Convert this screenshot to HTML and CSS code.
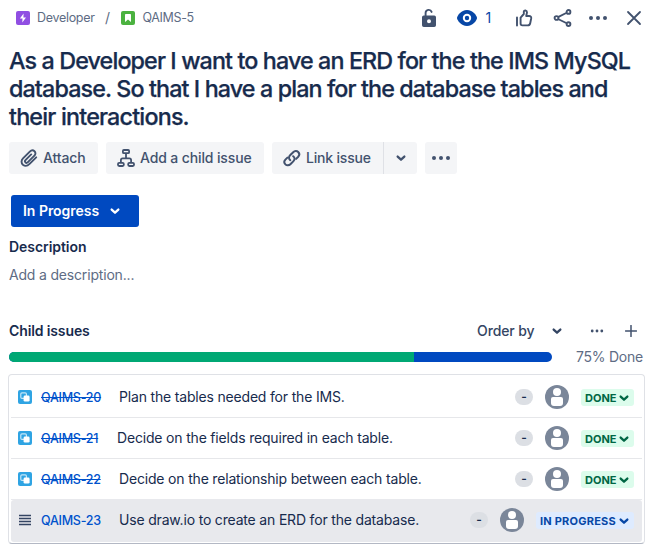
FILE: index.html
```html
<!DOCTYPE html>
<html lang="en">
<head>
<meta charset="utf-8">
<title>QAIMS-5</title>
<link rel="stylesheet" href="styles.css">
</head>
<body>
<svg class="defs" width="0" height="0">
  <symbol id="chevron" viewBox="0 0 10 10"><path d="M2.2 3.800 5 6.400 7.800 3.800" fill="none" stroke="currentColor" stroke-width="1.900" stroke-linecap="round" stroke-linejoin="round"/></symbol>
  <symbol id="dots" viewBox="0 0 20 6"><circle cx="3" cy="3" r="2"/><circle cx="10" cy="3" r="2"/><circle cx="17" cy="3" r="2"/></symbol>
  <symbol id="subtask" viewBox="0 0 14 14"><rect width="14" height="14" rx="2" fill="#2fa4e3"/><rect x="2.800" y="2.800" width="5.600" height="5.600" rx="1.200" fill="none" stroke="#c4e6f8" stroke-width="1.200"/><rect x="5.600" y="5.600" width="6" height="6" rx="1.400" fill="#fff"/></symbol>
  <symbol id="person" viewBox="0 0 24 24"><circle cx="12" cy="12" r="12" fill="#7a8699"/><circle cx="12" cy="7" r="4" fill="#fff"/><path d="M6 14q0-2 2-2h8q2 0 2 2v4q0 3-3 3H9q-3 0-3-3z" fill="#fff"/></symbol>
</svg>
<main class="issue">
  <header class="topbar">
    <svg class="type" viewBox="0 0 14 14"><rect width="14" height="14" rx="2" fill="#904ee2"/><path d="M7.600 2.600 3.900 7.600h2.600L6.300 11.400 10 6.400H7.400z" fill="#fff"/></svg>
    <span class="crumb crumb-parent">Developer</span>
    <span class="slash">/</span>
    <svg class="type" viewBox="0 0 14 14"><rect width="14" height="14" rx="2" fill="#4bb23f"/><path d="M4 3.800q0-.8.8-.8h4.400q.8 0 .8.800V11L7 8.400 4 11z" fill="#fff"/></svg>
    <span class="crumb crumb-key">QAIMS-5</span>
    <svg class="lock" width="16" height="20" viewBox="0 0 16 20"><path d="M4.600 9V4.800a3.100 3.100 0 0 1 6-.9" fill="none" stroke="#42526e" stroke-width="1.900" stroke-linecap="round"/><path fill-rule="evenodd" d="M2.800 7.500h10.400q1.800 0 1.800 1.800v7.900q0 1.800-1.800 1.800H2.800Q1 19 1 17.200V9.300q0-1.800 1.800-1.800zM8 11.300a2 2 0 1 0 0 4 2 2 0 0 0 0-4z" fill="#42526e"/></svg>
    <svg class="eye" width="20" height="16" viewBox="0 0 20 16"><path d="M10 0C4 0 0 6 0 8s4 8 10 8 10-6 10-8-4-8-10-8z" fill="#0747a6"/><circle cx="10" cy="8" r="3.200" fill="#0747a6" stroke="#fff" stroke-width="2"/></svg>
    <span class="watchers">1</span>
    <svg class="like" width="18" height="18" viewBox="0 0 18 18" fill="none" stroke="#42526e" stroke-width="1.900" stroke-linecap="round" stroke-linejoin="round"><path d="M2 8.500v8M5.600 8.600 8.800 5V2.800C8.800.8 12 1 12 3.500L11.200 7H14q2.500 0 2.200 2.200l-1 5q-.4 2.200-2.600 2.200H7.400q-1.800 0-1.800-1.800z"/></svg>
    <svg class="share" width="20" height="18" viewBox="0 0 20 18" fill="none" stroke="#42526e" stroke-width="1.900"><path d="M5 8.200 13.200 4M5 10l8.200 4"/><circle cx="3.500" cy="9" r="1.900"/><circle cx="15.500" cy="2.900" r="1.900"/><circle cx="15.500" cy="15.100" r="1.900"/></svg>
    <svg class="more" width="20" height="6" fill="#42526e"><use href="#dots"/></svg>
    <svg class="close" width="16" height="16" viewBox="0 0 16 16"><path d="M2 2l12 12M14 2 2 14" stroke="#42526e" stroke-width="1.800" stroke-linecap="round"/></svg>
  </header>

  <h1><span class="t1">As a Developer I want to have an ERD for the the IMS MySQL</span><br><span class="t2">database. So that I have a plan for the database tables and</span><br><span class="t3">their interactions.</span></h1>

  <div class="actions">
    <button class="btn attach"><svg width="18" height="20" viewBox="0 0 18 20" fill="none" stroke="#42526e" stroke-width="1.900" stroke-linecap="round"><path d="M16.200 9.300 9.600 15.900c-2 2-4.800 2.400-6.700.8-1.900-1.700-1.700-4.500.1-6.300l6.800-6.800c1.400-1.400 3.500-1.500 4.700-.4 1.300 1.200 1.200 3.200-.1 4.500l-6.500 6.500c-.8.8-1.900.8-2.500.2-.7-.7-.5-1.700.3-2.500l5.500-5.500"/></svg><span>Attach</span></button>
    <button class="btn child"><svg width="18" height="18" viewBox="0 0 18 18" fill="none" stroke="#42526e" stroke-width="1.800"><rect x="5.900" y="1" width="6.200" height="3.200" rx="1"/><rect x="1" y="13.800" width="5.800" height="3.200" rx="1.200"/><rect x="11.200" y="13.800" width="5.800" height="3.200" rx="1.200"/><path d="M9 4.200V9M3.900 13.800v-2.600Q3.900 9.300 5.600 9.300h6.800q1.700 0 1.700 1.900v2.600"/></svg><span>Add a child issue</span></button>
    <div class="split">
      <button class="btn link"><svg width="20" height="20" viewBox="0 0 20 20" fill="none" stroke="#42526e" stroke-width="2" stroke-linecap="round"><path d="M8.300 12.200C6.500 10.600 6.700 8.700 8.100 7.300l3.100-3.100c1.400-1.400 3.700-1.500 5-.2s1.300 3.400 0 4.800l-2.100 2.100"/><path d="M11.200 8.200c1.900 1.600 1.700 3.500.3 4.900l-3.100 3.100c-1.400 1.400-3.700 1.500-5 .2s-1.300-3.400 0-4.800L5.400 9.600"/></svg><span>Link issue</span></button>
      <button class="btn drop"><svg width="12" height="12"><use href="#chevron"/></svg></button>
    </div>
    <button class="btn kebab"><svg width="20" height="6" fill="#42526e"><use href="#dots"/></svg></button>
  </div>

  <button class="status"><span>In Progress</span><svg width="12" height="12"><use href="#chevron"/></svg></button>

  <h2 class="desc-title"><span>Description</span></h2>
  <p class="desc"><span>Add a description...</span></p>

  <div class="children-head">
    <h2><span class="child-title">Child issues</span></h2>
    <span class="order">Order by</span>
    <svg class="order-chev" width="12" height="12"><use href="#chevron"/></svg>
    <svg class="small-more" width="14" height="4" viewBox="0 0 14 4" fill="#42526e"><circle cx="2.200" cy="2" r="1.400"/><circle cx="7" cy="2" r="1.400"/><circle cx="11.800" cy="2" r="1.400"/></svg>
    <svg class="plus" width="12" height="12" viewBox="0 0 12 12"><path d="M6 .5v11M.5 6h11" stroke="#42526e" stroke-width="1.500" stroke-linecap="round"/></svg>
  </div>
  <div class="progress">
    <div class="bar"><div class="bar-done"></div></div>
    <span class="pct">75% Done</span>
  </div>

  <div class="list">
    <div class="row">
      <svg class="type"><use href="#subtask"/></svg><span class="key done">QAIMS-20</span><span class="summary">Plan the tables needed for the IMS.</span>
      <span class="points">-</span><svg class="avatar"><use href="#person"/></svg><span class="tag tag-done"><span>DONE</span><svg width="12" height="12"><use href="#chevron"/></svg></span>
    </div>
    <div class="row">
      <svg class="type"><use href="#subtask"/></svg><span class="key done">QAIMS-21</span><span class="summary s21">Decide on the fields required in each table.</span>
      <span class="points">-</span><svg class="avatar"><use href="#person"/></svg><span class="tag tag-done"><span>DONE</span><svg width="12" height="12"><use href="#chevron"/></svg></span>
    </div>
    <div class="row">
      <svg class="type"><use href="#subtask"/></svg><span class="key done">QAIMS-22</span><span class="summary">Decide on the relationship between each table.</span>
      <span class="points">-</span><svg class="avatar"><use href="#person"/></svg><span class="tag tag-done"><span>DONE</span><svg width="12" height="12"><use href="#chevron"/></svg></span>
    </div>
    <div class="row active">
      <svg class="type" viewBox="0 0 14 14"><path d="M1 2.500h12M1 5.500h12M1 8.500h12M1 11.500h12" stroke="#344563" stroke-width="1.500"/></svg><span class="key">QAIMS-23</span><span class="summary">Use draw.io to create an ERD for the database.</span>
      <span class="points">-</span><svg class="avatar"><use href="#person"/></svg><span class="tag tag-progress"><span>IN PROGRESS</span><svg width="12" height="12"><use href="#chevron"/></svg></span>
    </div>
  </div>
</main>
</body>
</html>
```
FILE: styles.css
```css
* { box-sizing: border-box; }
body { margin: 0; background: #fff; color: #172b4d; font-family: Inter, "Liberation Sans", sans-serif; font-size: 14px; line-height: 20px; }
svg { display: block; flex: none; }
.defs { position: absolute; }
button { font: inherit; border: 0; margin: 0; padding: 0; }
h1, h2, p { margin: 0; }
span { white-space: nowrap; }
.issue { width: 655px; height: 559px; padding: 0 11px 0 9px; overflow: hidden; }
.type { width: 14px; height: 14px; }

.topbar { display: flex; align-items: center; height: 36px; padding-left: 7px; }
.crumb { color: #5e6c84; font-size: 12.5px; }
.crumb-parent { width: 57px; margin-left: 7px; letter-spacing: -0.3px; }
.slash { width: 7px; margin: 0 10px; color: #5e6c84; text-align: center; }
.crumb-key { width: 52px; margin-left: 7.5px; letter-spacing: -0.35px; }
.lock { margin-left: 226px; margin-top: -1px; }
.eye { margin-left: 20px; }
.watchers { width: 9px; margin-left: 9px; color: #0747a6; }
.like { margin-left: 20px; }
.share { margin-left: 20px; }
.more { margin-left: 15px; }
.close { margin-left: 18px; }

h1 { margin-top: 11px; font-size: 23.3px; line-height: 28px; font-weight: 500; white-space: nowrap; -webkit-text-stroke: 0.25px #172b4d; }
.t1 { letter-spacing: -0.88px; }
.t2 { letter-spacing: -0.88px; }
.t3 { letter-spacing: -0.8px; }

.actions { display: flex; gap: 8px; margin-top: 11px; }
.btn { display: flex; align-items: center; height: 32px; border-radius: 3px; background: #f4f5f7; color: #42526e; font-weight: 500; letter-spacing: -0.13px; }
.attach { width: 89px; padding-left: 11px; gap: 5px; }
.child { width: 158px; padding-left: 11px; gap: 5px; }
.split { display: flex; }
.link { width: 112px; padding-left: 10px; gap: 4px; border-right: 1px solid #dfe1e6; border-radius: 3px 0 0 3px; letter-spacing: -0.18px; }
.drop { width: 33px; justify-content: center; border-radius: 0 3px 3px 0; }
.kebab { width: 32px; justify-content: center; }

.status { display: flex; align-items: center; width: 128px; height: 32px; margin: 21px 0 0 2px; padding-left: 12px; gap: 10px; border-radius: 3px; background: #0049c0; color: #fff; font-weight: 600; letter-spacing: -0.03px; }
.status span { width: 76px; text-align: left; }

h2 { font-size: 14px; line-height: 20px; font-weight: 600; }
.desc-title { margin-top: 10px; letter-spacing: -0.05px; }
.desc { margin-top: 8px; color: #5e6c84; letter-spacing: -0.18px; }
.children-head { display: flex; align-items: center; height: 20px; margin-top: 36px; color: #344563; }
.children-head h2 { width: 468px; color: #172b4d; letter-spacing: -0.12px; }
.order { width: 58px; font-weight: 500; letter-spacing: -0.1px; }
.order-chev { margin-left: 16px; }
.small-more { margin-left: 27px; }
.plus { margin-left: 21px; }
.progress { display: flex; align-items: center; height: 20px; margin-top: 6px; }
.bar { flex: none; width: 543px; height: 10px; overflow: hidden; border-radius: 5px; background: #0049c0; }
.bar-done { width: 405px; height: 10px; background: #00a874; }
.pct { margin-left: 24px; color: #5e6c84; letter-spacing: -0.25px; }

.list { width: 637px; height: 170px; margin: 7px 0 0 -1px; padding: 2px; border: 1px solid #dfe1e6; border-bottom-color: #b3b8c4; border-radius: 4px; }
.row { display: flex; align-items: center; height: 41px; padding: 0 8px 0 7px; border-bottom: 1px solid #e6e7ea; }
.row:nth-child(3) { border-bottom-color: #e8e9ed; }
.row.active { height: 42px; padding-bottom: 2px; background: #e8e9ed; border: 0; border-radius: 3px; }
.key { width: 60px; margin-left: 9px; padding-top: 2px; color: #0052cc; font-size: 12.5px; font-weight: 450; letter-spacing: -0.25px; }
.done { text-decoration: line-through; }
.summary { flex: 1; margin-left: 18px; letter-spacing: -0.18px; }
.s21 { margin-left: 16px; }
.points { width: 18px; height: 16px; border-radius: 8px; background: #dcdfe4; font-size: 12px; line-height: 15px; text-align: center; font-weight: 600; }
.avatar { width: 24px; height: 24px; margin: 0 12px; }
.tag { display: flex; align-items: center; justify-content: space-between; height: 17px; margin-top: 1px; padding: 1px 4px 0; border-radius: 3px; font-size: 11px; line-height: 16px; font-weight: 700; }
.tag-done { width: 53px; background: #dcfcec; color: #006644; }
.tag-progress { width: 98px; background: #deebff; color: #0747a6; letter-spacing: 0.22px; }
```
